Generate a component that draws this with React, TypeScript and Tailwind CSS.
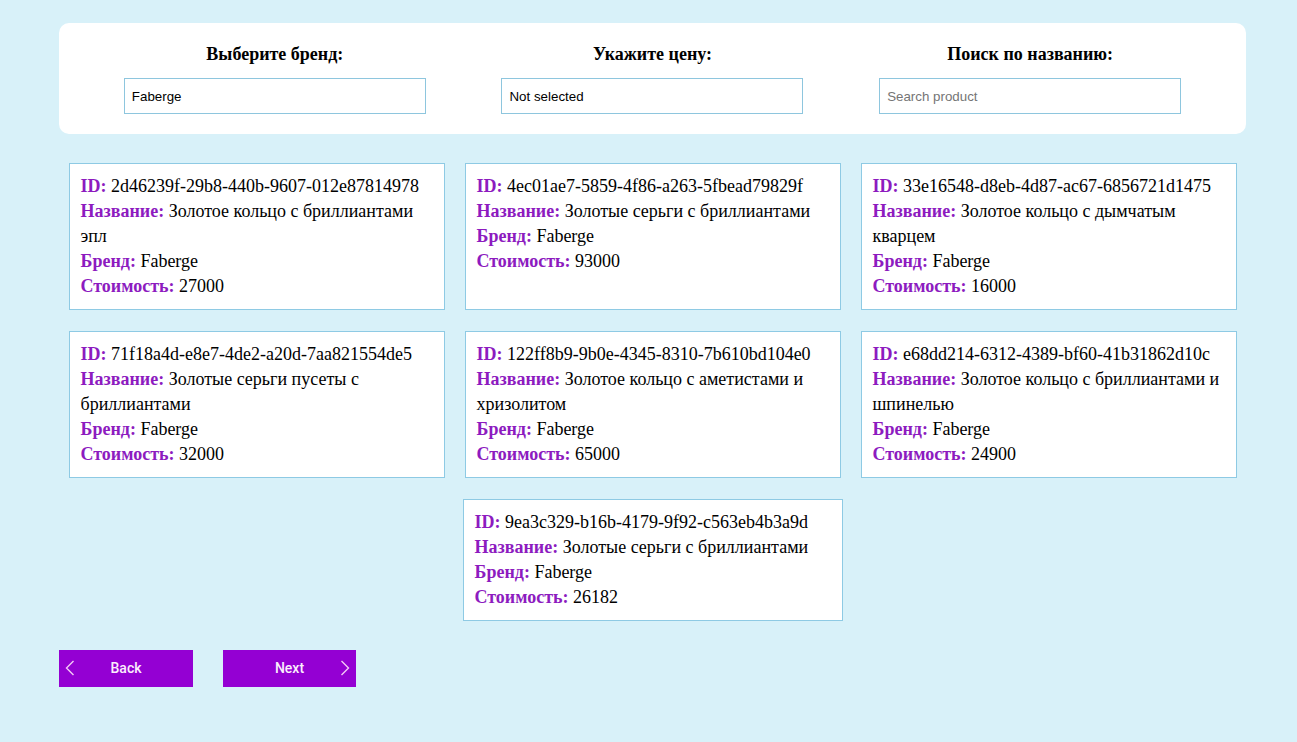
type Product = { id: string; name: string; brand: string; price: number };

const products: Product[] = [
  { id: '2d46239f-29b8-440b-9607-012e87814978', name: 'Золотое кольцо с бриллиантами эпл', brand: 'Faberge', price: 27000 },
  { id: '4ec01ae7-5859-4f86-a263-5fbead79829f', name: 'Золотые серьги с бриллиантами', brand: 'Faberge', price: 93000 },
  { id: '33e16548-d8eb-4d87-ac67-6856721d1475', name: 'Золотое кольцо с дымчатым кварцем', brand: 'Faberge', price: 16000 },
  { id: '71f18a4d-e8e7-4de2-a20d-7aa821554de5', name: 'Золотые серьги пусеты с бриллиантами', brand: 'Faberge', price: 32000 },
  { id: '122ff8b9-9b0e-4345-8310-7b610bd104e0', name: 'Золотое кольцо с аметистами и хризолитом', brand: 'Faberge', price: 65000 },
  { id: 'e68dd214-6312-4389-bf60-41b31862d10c', name: 'Золотое кольцо с бриллиантами и шпинелью', brand: 'Faberge', price: 24900 },
  { id: '9ea3c329-b16b-4179-9f92-c563eb4b3a9d', name: 'Золотые серьги с бриллиантами', brand: 'Faberge', price: 26182 },
];

const serif = "font-['Liberation_Serif','Times_New_Roman',serif]";

function Filter({ label, value, placeholder }: { label: string; value?: string; placeholder?: string }) {
  return (
    <div className="flex flex-col items-center">
      <label className={`${serif} text-[18px] font-bold text-black leading-[21px] mb-[13px]`}>{label}</label>
      <input
        readOnly
        value={value ?? ''}
        placeholder={placeholder}
        className="w-[302px] h-[36px] border border-[#8ec6de] px-[7px] text-[13.33px] text-black placeholder:text-[#757575] font-['Liberation_Sans',Arial,sans-serif] outline-none"
      />
    </div>
  );
}

function ProductCard({ p, wide }: { p: Product; wide?: boolean }) {
  return (
    <div className={`${wide ? 'w-[380px]' : 'w-[376px]'} bg-white border border-[#8ecae4] px-[11px] py-[10px] ${serif} text-[18px] leading-[25px] text-black`}>
      <div><span className="font-bold text-[#8d1bbf]">ID:</span> {p.id}</div>
      <div><span className="font-bold text-[#8d1bbf]">Название:</span> {p.name}</div>
      <div><span className="font-bold text-[#8d1bbf]">Бренд:</span> {p.brand}</div>
      <div><span className="font-bold text-[#8d1bbf]">Стоимость:</span> {p.price}</div>
    </div>
  );
}

function Chevron({ dir }: { dir: 'left' | 'right' }) {
  return (
    <svg
      width="10"
      height="16"
      viewBox="0 0 10 16"
      fill="none"
      stroke="#f3c8f5"
      strokeWidth="1.4"
      className={`absolute top-[10px] ${dir === 'left' ? 'left-[6px]' : 'right-[6px]'}`}
    >
      {dir === 'left' ? <polyline points="8.5,1 1.5,8 8.5,15" /> : <polyline points="1.5,1 8.5,8 1.5,15" />}
    </svg>
  );
}

export default function App() {
  return (
    <div className="min-h-[742px] bg-[#d8f1f9] pt-[23px]">
      <div className="ml-[59px] w-[1187px]">
        {/* Filters */}
        <div className="bg-white rounded-[10px] px-[27px] pt-[21px] pb-[20px] grid grid-cols-3">
          <Filter label="Выберите бренд:" value="Faberge" />
          <Filter label="Укажите цену:" value="Not selected" />
          <Filter label="Поиск по названию:" placeholder="Search product" />
        </div>

        {/* Products */}
        <div className="flex flex-wrap justify-center gap-x-[20px] gap-y-[21px] mt-[29px] px-[8px]">
          {products.map((p, i) => (
            <ProductCard key={p.id} p={p} wide={i === products.length - 1} />
          ))}
        </div>

        {/* Pagination */}
        <div className="flex gap-[30px] mt-[29px]">
          <button className="relative w-[134px] h-[37px] bg-[#9400d3] text-[#fbeefc] text-[14px] font-medium font-['Roboto',sans-serif]">
            <Chevron dir="left" />
            Back
          </button>
          <button className="relative w-[133px] h-[37px] bg-[#9400d3] text-[#fbeefc] text-[14px] font-medium font-['Roboto',sans-serif]">
            Next
            <Chevron dir="right" />
          </button>
        </div>
      </div>
    </div>
  );
}
